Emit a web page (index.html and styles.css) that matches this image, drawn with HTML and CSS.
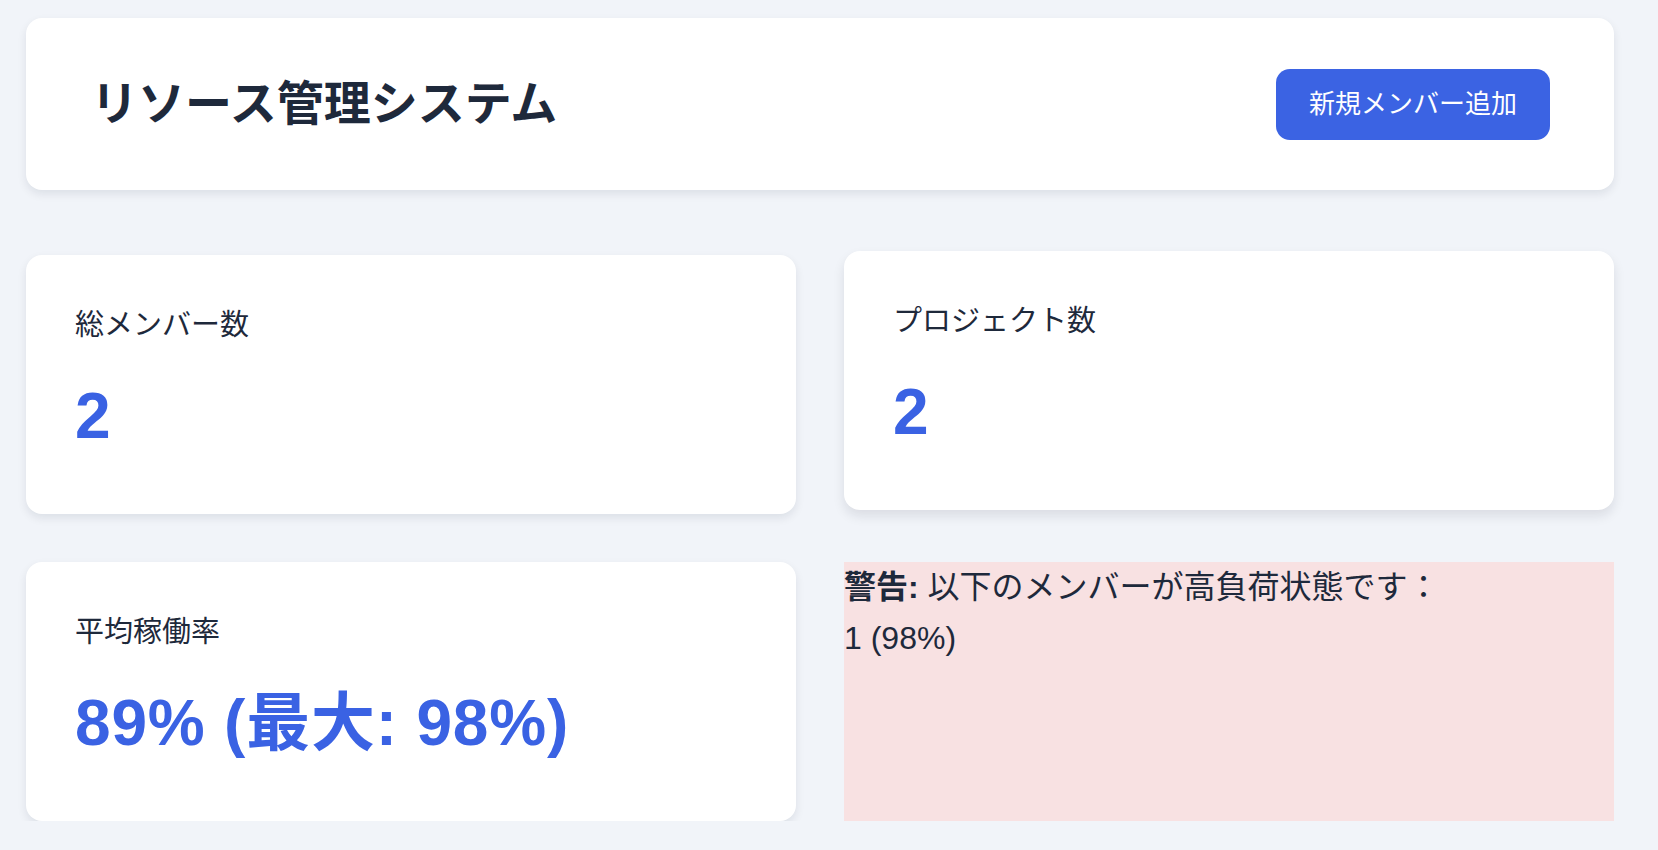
FILE: index.html
```html
<!DOCTYPE html>
<html lang="ja">
<head>
<meta charset="utf-8">
<title>リソース管理システム</title>
<link rel="stylesheet" href="styles.css">
</head>
<body>
<div class="app">
  <header class="header">
    <h1 class="title">リソース管理システム</h1>
    <button class="btn-primary" type="button">新規メンバー追加</button>
  </header>
  <section class="stats">
    <div class="card">
      <p class="card-label">総メンバー数</p>
      <p class="card-value">2</p>
    </div>
    <div class="card card-raised">
      <p class="card-label">プロジェクト数</p>
      <p class="card-value">2</p>
    </div>
    <div class="card">
      <p class="card-label">平均稼働率</p>
      <p class="card-value">89% (最大: 98%)</p>
    </div>
    <div class="alert">
      <div class="alert-line"><strong>警告:</strong> 以下のメンバーが高負荷状態です：</div>
      <div class="alert-line">1 (98%)</div>
    </div>
  </section>
</div>
</body>
</html>
```
FILE: styles.css
```css
* { box-sizing: border-box; }

html, body {
  margin: 0;
  padding: 0;
  background: #f1f4f9;
  font-family: "Liberation Sans", "Noto Sans CJK JP", sans-serif;
  color: #1e293b;
}

.app {
  padding: 18px 44px 0 26px;
}

.header {
  display: flex;
  align-items: center;
  justify-content: space-between;
  background: #ffffff;
  border-radius: 16px;
  padding: 50.5px 64px 50.5px 65px;
  box-shadow: 0 4px 10px rgba(15, 23, 42, 0.09);
}

.title {
  margin: 0;
  font-size: 47px;
  line-height: 58px;
  font-weight: 700;
  color: #1e293b;
}

.btn-primary {
  font-family: inherit;
  font-size: 26px;
  line-height: 37px;
  padding: 17px 33px;
  border: none;
  border-radius: 14px;
  background: #3b63e3;
  color: #ffffff;
  cursor: pointer;
}

.stats {
  display: grid;
  grid-template-columns: 1fr 1fr;
  gap: 48px;
  margin-top: 65px;
}

.card {
  background: #ffffff;
  border-radius: 16px;
  padding: 50px 48px 48px 49px;
  box-shadow: 0 4px 10px rgba(15, 23, 42, 0.09);
}

.card-raised {
  transform: translateY(-4px);
  box-shadow: 0 6px 12px rgba(15, 23, 42, 0.1);
}

.card-label {
  margin: 0;
  font-size: 29px;
  line-height: 40px;
  color: #1e293b;
}

.card-value {
  margin: 34px 0 13px;
  font-size: 64px;
  line-height: 74px;
  font-weight: 700;
  letter-spacing: 0.8px;
  color: #3a62e3;
}

.alert {
  background: #f8e1e2;
  font-size: 32px;
  line-height: 51px;
  color: #1e293b;
}

.alert-line strong {
  font-weight: 700;
}
```
